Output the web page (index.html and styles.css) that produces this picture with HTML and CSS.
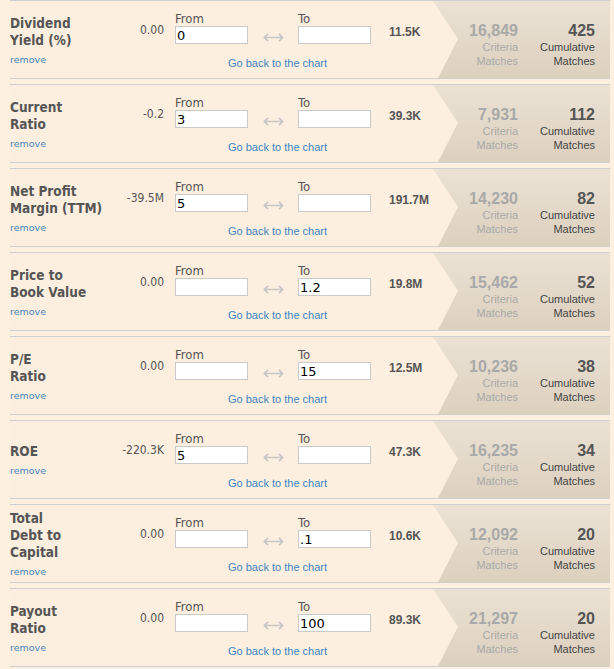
FILE: index.html
```html
<!DOCTYPE html>
<html>
<head>
<meta charset="utf-8">
<link rel="stylesheet" href="styles.css">
</head>
<body>
<div class="screener">

  <div class="row">
    <div class="label-col"><div class="name">Dividend<br>Yield (%)</div><a class="remove">remove</a></div>
    <div class="low">0.00</div>
    <div class="range">
      <div class="inputs">
        <label class="field"><span class="cap">From</span><input type="text" value="0"></label>
        <svg class="arrow" width="23" height="11" viewBox="0 0 23 11"><path d="M1.5 5.5H21.5M5.5 1.5L1.5 5.5L5.5 9.5M17.5 1.5L21.5 5.5L17.5 9.5"/></svg>
        <label class="field"><span class="cap">To</span><input type="text" value=""></label>
      </div>
      <a class="back">Go back to the chart</a>
    </div>
    <div class="high">11.5K</div>
    <div class="stats">
      <div class="stat crit"><b>16,849</b><span>Criteria<br>Matches</span></div>
      <div class="stat cum"><b>425</b><span>Cumulative<br>Matches</span></div>
    </div>
  </div>

  <div class="row">
    <div class="label-col"><div class="name">Current<br>Ratio</div><a class="remove">remove</a></div>
    <div class="low">-0.2</div>
    <div class="range">
      <div class="inputs">
        <label class="field"><span class="cap">From</span><input type="text" value="3"></label>
        <svg class="arrow" width="23" height="11" viewBox="0 0 23 11"><path d="M1.5 5.5H21.5M5.5 1.5L1.5 5.5L5.5 9.5M17.5 1.5L21.5 5.5L17.5 9.5"/></svg>
        <label class="field"><span class="cap">To</span><input type="text" value=""></label>
      </div>
      <a class="back">Go back to the chart</a>
    </div>
    <div class="high">39.3K</div>
    <div class="stats">
      <div class="stat crit"><b>7,931</b><span>Criteria<br>Matches</span></div>
      <div class="stat cum"><b>112</b><span>Cumulative<br>Matches</span></div>
    </div>
  </div>

  <div class="row">
    <div class="label-col"><div class="name">Net Profit<br>Margin (TTM)</div><a class="remove">remove</a></div>
    <div class="low">-39.5M</div>
    <div class="range">
      <div class="inputs">
        <label class="field"><span class="cap">From</span><input type="text" value="5"></label>
        <svg class="arrow" width="23" height="11" viewBox="0 0 23 11"><path d="M1.5 5.5H21.5M5.5 1.5L1.5 5.5L5.5 9.5M17.5 1.5L21.5 5.5L17.5 9.5"/></svg>
        <label class="field"><span class="cap">To</span><input type="text" value=""></label>
      </div>
      <a class="back">Go back to the chart</a>
    </div>
    <div class="high">191.7M</div>
    <div class="stats">
      <div class="stat crit"><b>14,230</b><span>Criteria<br>Matches</span></div>
      <div class="stat cum"><b>82</b><span>Cumulative<br>Matches</span></div>
    </div>
  </div>

  <div class="row">
    <div class="label-col"><div class="name">Price to<br>Book Value</div><a class="remove">remove</a></div>
    <div class="low">0.00</div>
    <div class="range">
      <div class="inputs">
        <label class="field"><span class="cap">From</span><input type="text" value=""></label>
        <svg class="arrow" width="23" height="11" viewBox="0 0 23 11"><path d="M1.5 5.5H21.5M5.5 1.5L1.5 5.5L5.5 9.5M17.5 1.5L21.5 5.5L17.5 9.5"/></svg>
        <label class="field"><span class="cap">To</span><input type="text" value="1.2"></label>
      </div>
      <a class="back">Go back to the chart</a>
    </div>
    <div class="high">19.8M</div>
    <div class="stats">
      <div class="stat crit"><b>15,462</b><span>Criteria<br>Matches</span></div>
      <div class="stat cum"><b>52</b><span>Cumulative<br>Matches</span></div>
    </div>
  </div>

  <div class="row">
    <div class="label-col"><div class="name">P/E<br>Ratio</div><a class="remove">remove</a></div>
    <div class="low">0.00</div>
    <div class="range">
      <div class="inputs">
        <label class="field"><span class="cap">From</span><input type="text" value=""></label>
        <svg class="arrow" width="23" height="11" viewBox="0 0 23 11"><path d="M1.5 5.5H21.5M5.5 1.5L1.5 5.5L5.5 9.5M17.5 1.5L21.5 5.5L17.5 9.5"/></svg>
        <label class="field"><span class="cap">To</span><input type="text" value="15"></label>
      </div>
      <a class="back">Go back to the chart</a>
    </div>
    <div class="high">12.5M</div>
    <div class="stats">
      <div class="stat crit"><b>10,236</b><span>Criteria<br>Matches</span></div>
      <div class="stat cum"><b>38</b><span>Cumulative<br>Matches</span></div>
    </div>
  </div>

  <div class="row">
    <div class="label-col"><div class="name">ROE</div><a class="remove">remove</a></div>
    <div class="low">-220.3K</div>
    <div class="range">
      <div class="inputs">
        <label class="field"><span class="cap">From</span><input type="text" value="5"></label>
        <svg class="arrow" width="23" height="11" viewBox="0 0 23 11"><path d="M1.5 5.5H21.5M5.5 1.5L1.5 5.5L5.5 9.5M17.5 1.5L21.5 5.5L17.5 9.5"/></svg>
        <label class="field"><span class="cap">To</span><input type="text" value=""></label>
      </div>
      <a class="back">Go back to the chart</a>
    </div>
    <div class="high">47.3K</div>
    <div class="stats">
      <div class="stat crit"><b>16,235</b><span>Criteria<br>Matches</span></div>
      <div class="stat cum"><b>34</b><span>Cumulative<br>Matches</span></div>
    </div>
  </div>

  <div class="row">
    <div class="label-col"><div class="name">Total<br>Debt to<br>Capital</div><a class="remove">remove</a></div>
    <div class="low">0.00</div>
    <div class="range">
      <div class="inputs">
        <label class="field"><span class="cap">From</span><input type="text" value=""></label>
        <svg class="arrow" width="23" height="11" viewBox="0 0 23 11"><path d="M1.5 5.5H21.5M5.5 1.5L1.5 5.5L5.5 9.5M17.5 1.5L21.5 5.5L17.5 9.5"/></svg>
        <label class="field"><span class="cap">To</span><input type="text" value=".1"></label>
      </div>
      <a class="back">Go back to the chart</a>
    </div>
    <div class="high">10.6K</div>
    <div class="stats">
      <div class="stat crit"><b>12,092</b><span>Criteria<br>Matches</span></div>
      <div class="stat cum"><b>20</b><span>Cumulative<br>Matches</span></div>
    </div>
  </div>

  <div class="row">
    <div class="label-col"><div class="name">Payout<br>Ratio</div><a class="remove">remove</a></div>
    <div class="low">0.00</div>
    <div class="range">
      <div class="inputs">
        <label class="field"><span class="cap">From</span><input type="text" value=""></label>
        <svg class="arrow" width="23" height="11" viewBox="0 0 23 11"><path d="M1.5 5.5H21.5M5.5 1.5L1.5 5.5L5.5 9.5M17.5 1.5L21.5 5.5L17.5 9.5"/></svg>
        <label class="field"><span class="cap">To</span><input type="text" value="100"></label>
      </div>
      <a class="back">Go back to the chart</a>
    </div>
    <div class="high">89.3K</div>
    <div class="stats">
      <div class="stat crit"><b>21,297</b><span>Criteria<br>Matches</span></div>
      <div class="stat cum"><b>20</b><span>Cumulative<br>Matches</span></div>
    </div>
  </div>

</div>
</body>
</html>
```

FILE: styles.css
```css
html, body {
  margin: 0;
  padding: 0;
  background: #fdf0df;
}

body {
  font-family: "DejaVu Sans", Verdana, sans-serif;
  color: #555;
}

.screener {
  padding-left: 10px;
}

.row {
  display: flex;
  width: 600px;
  height: 79px;
  box-sizing: border-box;
  border-top: 1px solid #cdd0d3;
  border-bottom: 1px solid #cdd0d3;
  margin-bottom: 5px;
  background: #fdefdf;
}

.label-col {
  width: 100px;
  display: flex;
  flex-direction: column;
  justify-content: center;
}

.name {
  font-family: "DejaVu Sans Condensed", "DejaVu Sans", sans-serif;
  font-stretch: condensed;
  font-weight: bold;
  font-size: 13.5px;
  line-height: 17px;
  color: #555;
  padding-top: 1px;
}

.remove {
  margin-top: 5px;
  font-family: "DejaVu Sans", sans-serif;
  font-size: 9.5px;
  line-height: 12px;
  color: #4585bd;
  cursor: pointer;
}

.low {
  width: 54px;
  padding-top: 22px;
  text-align: right;
  font-family: "DejaVu Sans Condensed", "DejaVu Sans", sans-serif;
  font-stretch: condensed;
  font-size: 12px;
  line-height: 14px;
  color: #555;
}

.range {
  margin-left: 11px;
  width: 196px;
  padding-top: 10px;
  display: flex;
  flex-direction: column;
}

.inputs {
  display: flex;
  align-items: flex-end;
}

.field {
  display: flex;
  flex-direction: column;
  width: 73px;
}

.cap {
  font-family: "DejaVu Sans Condensed", "DejaVu Sans", sans-serif;
  font-stretch: condensed;
  font-size: 13px;
  line-height: 15px;
  color: #555;
}

.field input {
  width: 73px;
  height: 18px;
  box-sizing: border-box;
  margin: 0;
  padding: 0 1px;
  border: 1px solid #cacaca;
  background: #fff;
  font-family: "DejaVu Sans", sans-serif;
  font-size: 13px;
  color: #000;
  outline: none;
}

.arrow {
  margin: 0 14px 1px 15px;
  fill: none;
  stroke: #c6c6c6;
  stroke-width: 1.8;
}

.back {
  margin-top: 13px;
  padding-left: 53px;
  font-family: "Liberation Sans", Arial, sans-serif;
  font-size: 11px;
  line-height: 13px;
  color: #3f85c2;
  cursor: pointer;
}

.high {
  margin-left: 18px;
  padding-top: 24px;
  font-family: "Liberation Sans", Arial, sans-serif;
  font-weight: bold;
  font-size: 12px;
  line-height: 14px;
  color: #555;
}

.stats {
  margin-left: auto;
  width: 177px;
  display: flex;
  justify-content: flex-end;
  gap: 15px;
  padding: 21px 15px 0 0;
  box-sizing: border-box;
  background: linear-gradient(#ebe2d5, #dcd0be);
  clip-path: polygon(0 0, 100% 0, 100% 100%, 5px 100%, 25px 49%);
  font-family: "Liberation Sans", Arial, sans-serif;
}

.stat {
  width: 62px;
  display: flex;
  flex-direction: column;
  align-items: flex-end;
  text-align: right;
}

.stat b {
  font-size: 16px;
  line-height: 18px;
}

.stat span {
  font-size: 11px;
  line-height: 14px;
}

.crit {
  color: #a9a9a9;
}

.cum {
  color: #444;
}

.cum b {
  color: #555;
}
```
